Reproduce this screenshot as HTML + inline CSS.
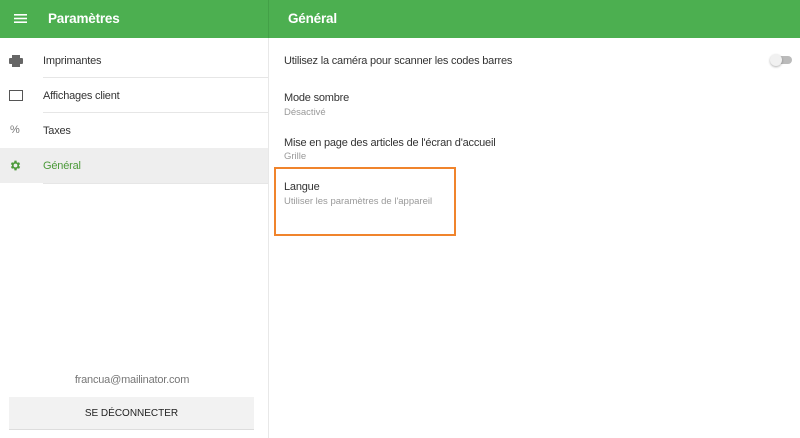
<!DOCTYPE html>
<html><head><meta charset="utf-8"><style>
*{margin:0;padding:0;box-sizing:border-box}
body{width:800px;height:438px;overflow:hidden;background:#fff;font-family:"Liberation Sans",sans-serif;position:relative;color:#333}
.a{position:absolute}
.hdr{left:0;top:0;width:800px;height:38px;background:#4caf50}
.t{font-size:11px;white-space:nowrap;letter-spacing:-0.2px}
.s{font-size:9.5px;color:#999;white-space:nowrap}
</style></head><body>
<div class="a hdr"></div>
<div class="a" style="left:268px;top:0;width:1px;height:38px;background:#43a047"></div>
<svg class="a" style="left:14px;top:13px" width="13" height="11"><rect x="0" y="1" width="13" height="1.6" fill="#fff"/><rect x="0" y="4.7" width="13" height="1.6" fill="#fff"/><rect x="0" y="8.4" width="13" height="1.6" fill="#fff"/></svg>
<div class="a" style="left:48px;top:11px;color:#fff;font-size:13.5px;font-weight:bold;letter-spacing:-0.2px">Paramètres</div>
<div class="a" style="left:288px;top:11px;color:#fff;font-size:13.5px;font-weight:bold;letter-spacing:-0.2px">Général</div>
<div class="a" style="left:268px;top:38px;width:1px;height:400px;background:#e8e8e8"></div>
<svg class="a" style="left:9px;top:55px" width="14" height="12"><rect x="3" y="0" width="8" height="3" fill="#666"/><rect x="0" y="3" width="14" height="6" rx="1" fill="#666"/><rect x="3" y="8" width="8" height="4" fill="#666"/></svg>
<div class="a t" style="left:43px;top:55px">Imprimantes</div>
<div class="a" style="left:43px;top:77px;width:225px;height:1px;background:#e6e6e6"></div>
<div class="a" style="left:9px;top:90px;width:14px;height:11px;border:1.6px solid #555"></div>
<div class="a t" style="left:43px;top:90px">Affichages client</div>
<div class="a" style="left:43px;top:112px;width:225px;height:1px;background:#e6e6e6"></div>
<div class="a" style="left:10px;top:124px;font-size:11px;color:#777">%</div>
<div class="a t" style="left:43px;top:125px">Taxes</div>
<div class="a" style="left:0;top:148px;width:268px;height:35px;background:#eeeeee"></div>
<svg class="a" style="left:9px;top:159px" width="13" height="13" viewBox="0 0 24 24"><path fill="#4c9a3a" d="M19.4 13a7.5 7.5 0 000-2l2.1-1.6-2-3.5-2.5 1a7.3 7.3 0 00-1.7-1L15 3h-4l-.4 2.9a7.3 7.3 0 00-1.7 1l-2.5-1-2 3.5L6.6 11a7.5 7.5 0 000 2l-2.1 1.6 2 3.5 2.5-1c.5.4 1.1.7 1.7 1L11 21h4l.4-2.9c.6-.3 1.2-.6 1.7-1l2.5 1 2-3.5zM13 15.5a3.5 3.5 0 110-7 3.5 3.5 0 010 7z" transform="translate(-1 0)"/></svg>
<div class="a t" style="left:43px;top:160px;color:#4c9a3a">Général</div>
<div class="a" style="left:43px;top:183px;width:225px;height:1px;background:#e6e6e6"></div>
<div class="a" style="left:0;top:374px;width:264px;text-align:center;font-size:11px;color:#777;letter-spacing:-0.2px">francua@mailinator.com</div>
<div class="a" style="left:9px;top:397px;width:245px;height:33px;background:#f2f2f2;border-bottom:1px solid #ddd;text-align:center;line-height:33px;font-size:10px;color:#222">SE DÉCONNECTER</div>
<div class="a t" style="left:284px;top:55px">Utilisez la caméra pour scanner les codes barres</div>
<div class="a" style="left:772px;top:56px;width:20px;height:8px;border-radius:4px;background:#bbb"></div>
<div class="a" style="left:770px;top:54px;width:12px;height:12px;border-radius:6px;background:#f1f1f1;box-shadow:0 1px 2px rgba(0,0,0,.3)"></div>
<div class="a t" style="left:284px;top:92px">Mode sombre</div>
<div class="a s" style="left:284px;top:107px">Désactivé</div>
<div class="a t" style="left:284px;top:137px">Mise en page des articles de l'écran d'accueil</div>
<div class="a s" style="left:284px;top:151px">Grille</div>
<div class="a t" style="left:284px;top:181px">Langue</div>
<div class="a s" style="left:284px;top:196px">Utiliser les paramètres de l'appareil</div>
<div class="a" style="left:274px;top:167px;width:182px;height:69px;border:2.5px solid #f0842c"></div>
</body></html>
